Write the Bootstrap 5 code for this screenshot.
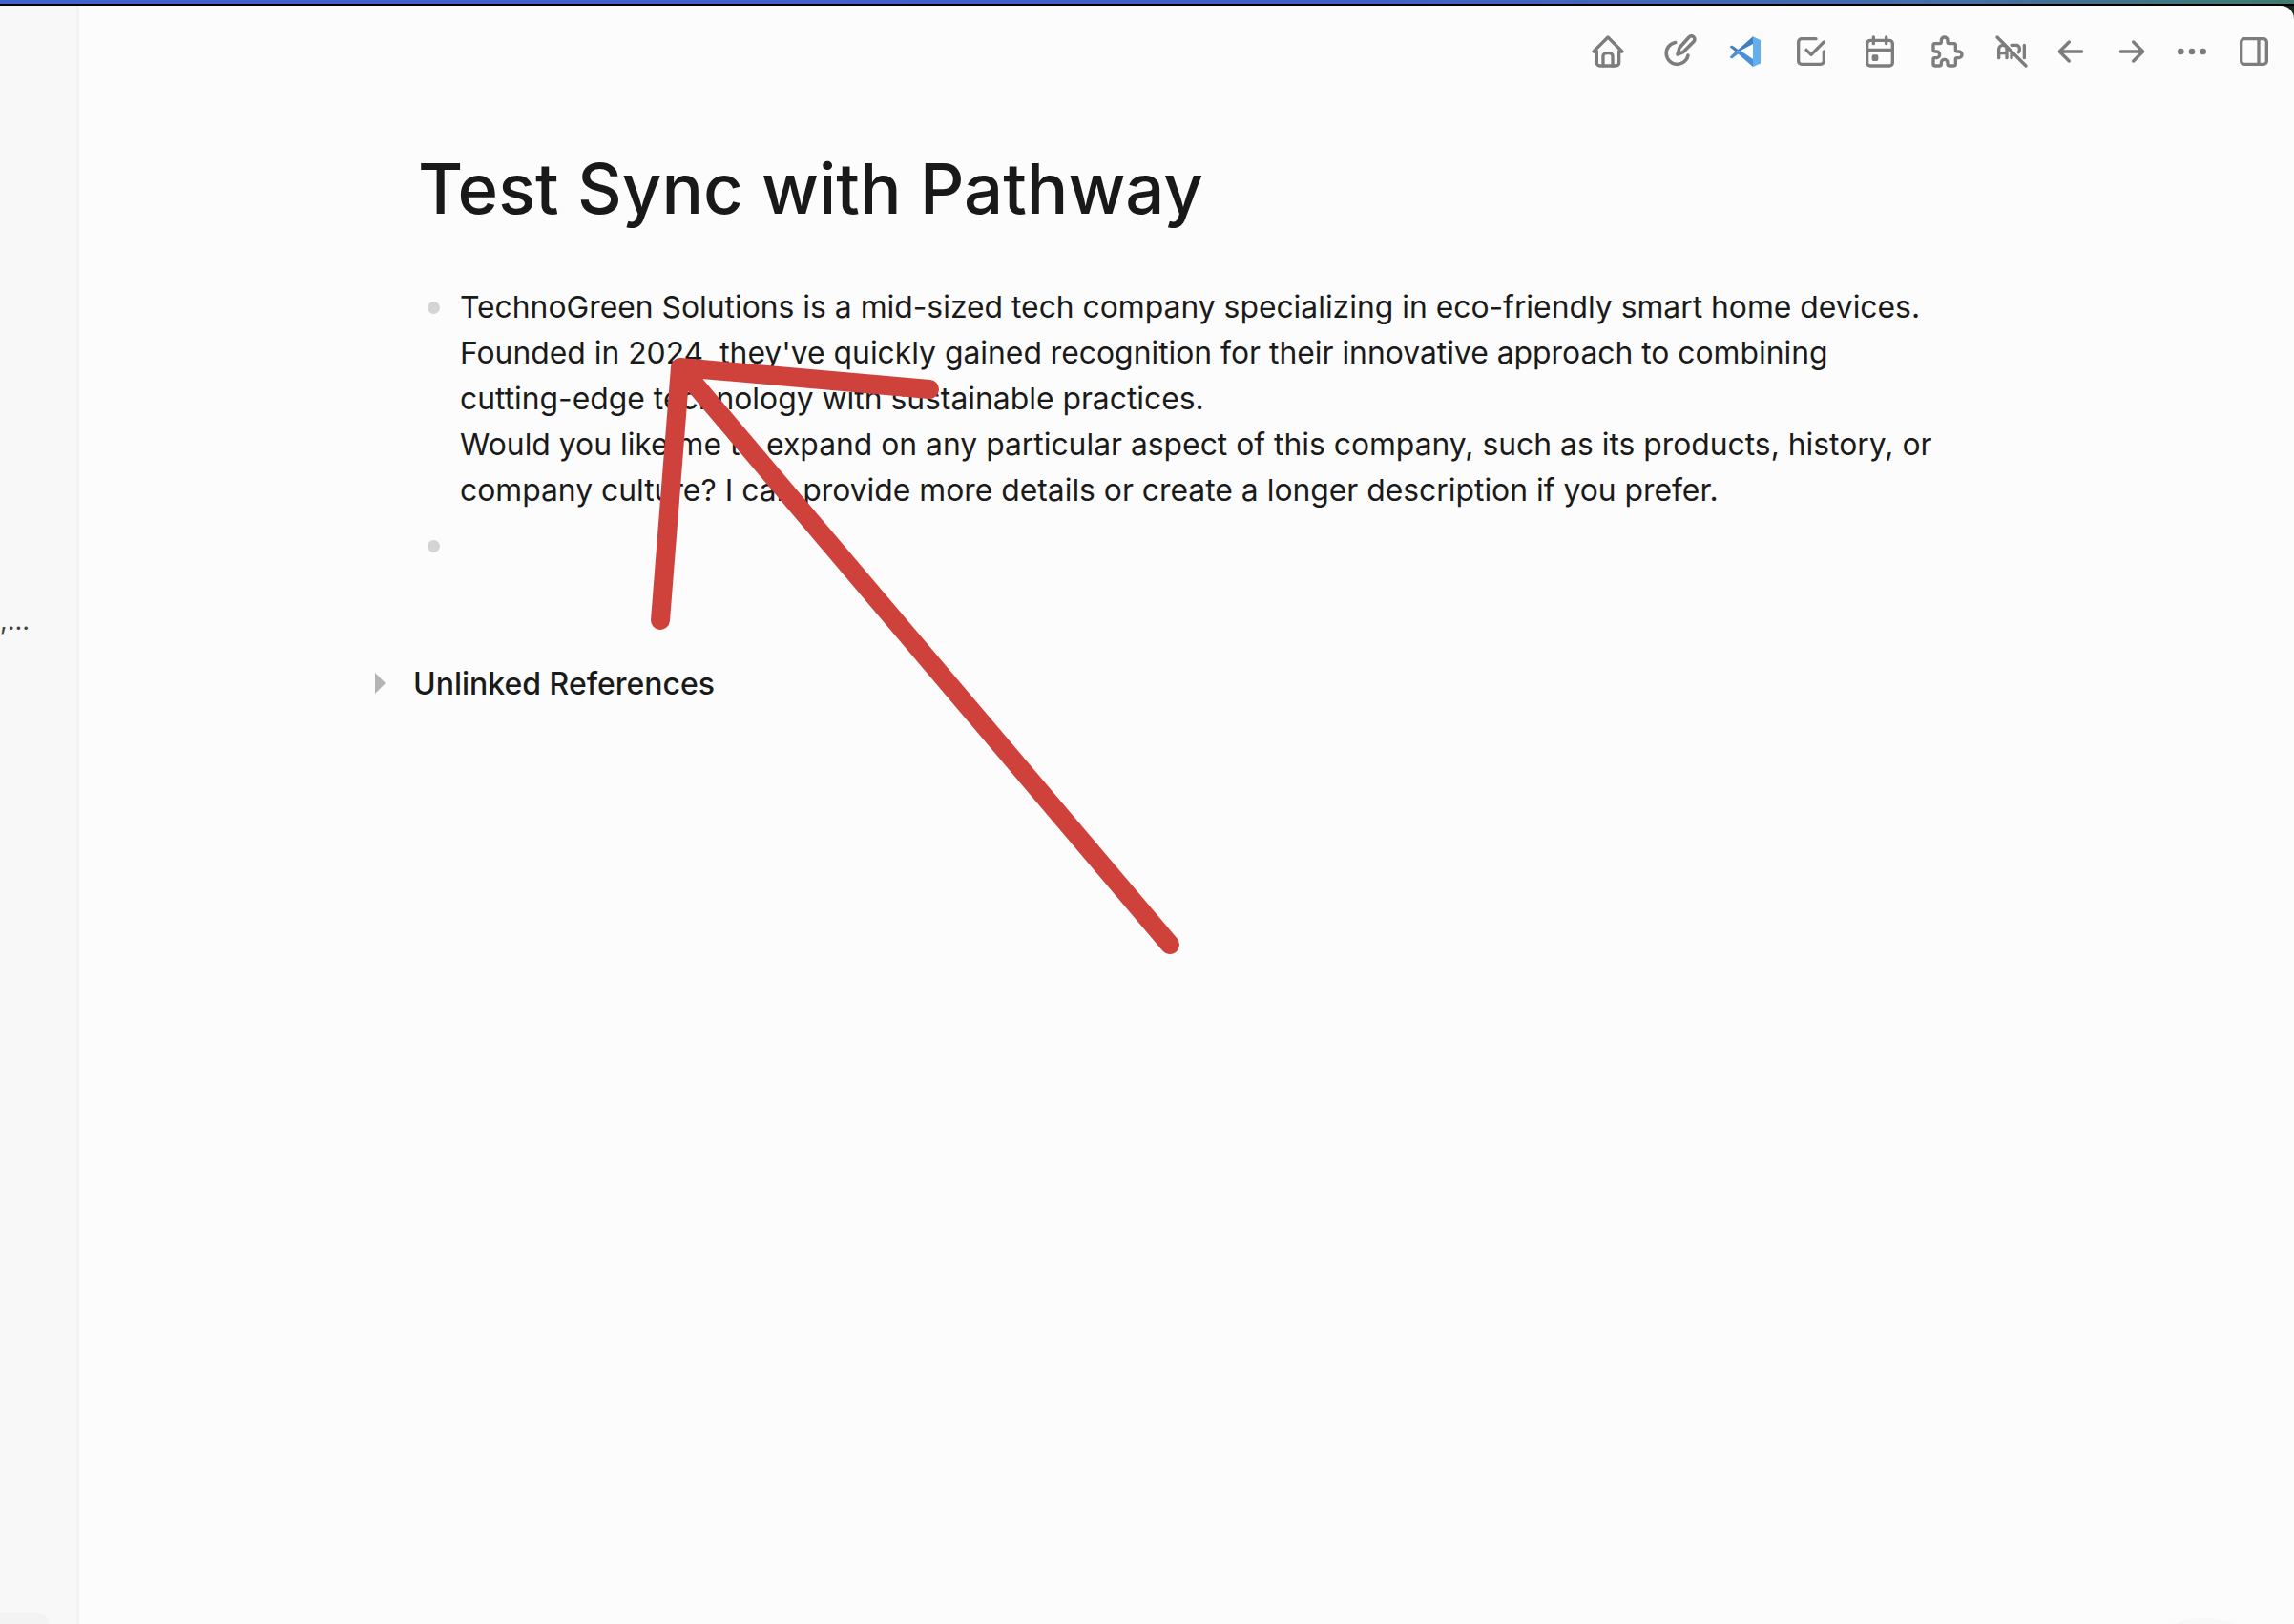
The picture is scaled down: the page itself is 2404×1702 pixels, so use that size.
<!DOCTYPE html>
<html lang="en">
<head>
<meta charset="utf-8">
<title>Test Sync with Pathway</title>
<link rel="stylesheet" href="https://cdn.jsdelivr.net/npm/bootstrap@5.3.0/dist/css/bootstrap.min.css">
<style>
html,body{height:100%;margin:0;overflow:hidden;background:#0d0d0d}
body{font-family:Inter,"Liberation Sans",sans-serif;color:#1a1a1a}
.shell{position:relative;width:2404px;height:1702px;overflow:hidden;background:#fcfcfc}
.topline{height:4px;background:linear-gradient(90deg,#4360cf 0%,#4360c8 60%,#476ea8 85%,#3f7a6c 100%)}
.topblack{height:2px;background:#000}
.workspace{height:1696px;background:#17261d}
.leftrail{width:83px;flex:none;background:#f8f8f8;border-right:3px solid #f3f3f3;position:relative;overflow:hidden}
.railtext{padding-top:627px;font-size:27px;line-height:36px;color:#444;white-space:nowrap}
.railpill{position:absolute;left:-30px;bottom:-20px;width:82px;height:32px;background:#f3f3f3;border-radius:14px}
.mainpane{flex:1;min-width:0;background:#fcfcfc;border-top-right-radius:14px;position:relative}
.toolrow{height:96px;padding-right:22px;padding-top:28px;align-items:flex-start}
.toolrow svg{width:40px;height:40px;flex:none;fill:none;stroke:#7d7d7d;stroke-width:2;stroke-linecap:round;stroke-linejoin:round}
.toolrow svg.pxicon{stroke-width:3.6}
.toolrow svg.noline{stroke:none}
.toolrow svg:nth-child(2){margin-left:34px}
.toolrow svg:nth-child(3){margin-left:29px}
.toolrow svg:nth-child(4){margin-left:30px}
.toolrow svg:nth-child(5){margin-left:32px}
.toolrow svg:nth-child(6){margin-left:31px}
.toolrow svg:nth-child(7){margin-left:27px}
.toolrow svg:nth-child(8){margin-left:22px}
.toolrow svg:nth-child(9){margin-left:24px}
.toolrow svg:nth-child(10){margin-left:23px}
.toolrow svg:nth-child(11){margin-left:25px}
.pagebody{padding-left:357px;width:1957px}
.pagetitle{font-size:72.4px;line-height:86px;font-weight:550;margin:53px 0 0 -2px;color:#191919}
.blocks{list-style:none;margin:57px 0 0;padding:0;font-size:31.84px;line-height:48px}
.blocks li{position:relative;padding-left:42px}
.blocks li::before{content:"";position:absolute;left:8px;top:18px;width:13px;height:13px;border-radius:50%;background:#d4d4d4}
.blocks li.emptyblock{height:48px;margin-top:10px}
.unlinked{margin-top:97px;margin-left:-42px;font-size:32px;line-height:48px;font-weight:500;color:#1a1a1a}
.tri{width:0;height:0;border-left:11px solid #b4b4b4;border-top:11px solid transparent;border-bottom:11px solid transparent;margin-left:-5px;margin-right:29px;margin-top:-3px}
.markup{position:absolute;left:0;top:0;width:2404px;height:1702px;pointer-events:none}
.cornerblob{position:absolute;left:2270px;top:1696px;width:80px;height:30px;border-radius:50%;background:#f8f8f8}
</style>
</head>
<body>
<div class="shell">
  <div class="topline"></div>
  <div class="topblack"></div>
  <div class="workspace d-flex">
    <aside class="leftrail">
      <div class="railtext">,...</div>
      <div class="railpill"></div>
    </aside>
    <main class="mainpane">
      <div class="toolrow d-flex justify-content-end">
        <svg viewBox="0 0 24 24"><path d="M5 12H3l9-9 9 9h-2"/><path d="M5 12v7a2 2 0 0 0 2 2h10a2 2 0 0 0 2-2v-7"/><path d="M9 21v-6a2 2 0 0 1 2-2h2a2 2 0 0 1 2 2v6"/></svg>
        <svg class="pxicon" viewBox="-2 1 40 40"><path d="M14.700 11.500A11.500 11.500 0 1 0 28 25"/><path d="M17 24l2-7L29 6a3.300 3.300 0 0 1 5 4.500L23 21.500z"/></svg>
        <svg class="noline" viewBox="-2 -2 40 40"><path fill="#65aeee" d="M27 2.300l8 3.700v24.500L27 34z"/><path fill="#3f7fbf" d="M27 2.300 11.500 16 5 11.500 2.500 13l6 5 5.500-1 13-7z"/><path fill="#4a90d9" d="M2.500 24l6-6 5.500-1 13 9v8L11.500 20.500 5 25.500z"/></svg>
        <svg viewBox="0 0 24 24"><path d="M9 11l3 3 8-8"/><path d="M20 12v6a2 2 0 0 1-2 2H6a2 2 0 0 1-2-2V6a2 2 0 0 1 2-2h9"/></svg>
        <svg viewBox="0 0 24 24"><rect x="4" y="5" width="16" height="16" rx="2"/><path d="M16 3v4M8 3v4M4 11h16M8 15h2v2H8z"/></svg>
        <svg viewBox="0 0 24 24"><path d="M4 7h3a1 1 0 0 0 1-1V5a2 2 0 0 1 4 0v1a1 1 0 0 0 1 1h3a1 1 0 0 1 1 1v3a1 1 0 0 0 1 1h1a2 2 0 0 1 0 4h-1a1 1 0 0 0-1 1v3a1 1 0 0 1-1 1h-3a1 1 0 0 1-1-1v-1a2 2 0 0 0-4 0v1a1 1 0 0 1-1 1H4a1 1 0 0 1-1-1v-3a1 1 0 0 1 1-1h1a2 2 0 0 0 0-4H4a1 1 0 0 1-1-1V8a1 1 0 0 1 1-1"/></svg>
        <svg viewBox="0 0 24 24"><path d="M4 13h5M12 16v-4m0-4h3a2 2 0 0 1 2 2v1c0 .554-.225 1.055-.589 1.417M13.000 13h-1M20 8v8M9 16v-5.500a2.500 2.500 0 0 0-5 0V16M3 3l18 18"/></svg>
        <svg viewBox="0 0 24 24"><path d="M5 12h14M5 12l6 6M5 12l6-6"/></svg>
        <svg viewBox="0 0 24 24"><path d="M5 12h14M13 18l6-6M13 6l6 6"/></svg>
        <svg viewBox="0 0 24 24"><circle cx="5" cy="12" r="1"/><circle cx="12" cy="12" r="1"/><circle cx="19" cy="12" r="1"/></svg>
        <svg viewBox="0 0 24 24"><rect x="4" y="4" width="16" height="16" rx="2"/><path d="M15 4v16"/></svg>
      </div>
      <article class="pagebody">
        <h1 class="pagetitle">Test Sync with Pathway</h1>
        <ul class="blocks">
          <li>TechnoGreen Solutions is a mid-sized tech company specializing in eco-friendly smart home devices. Founded in 2024, they've quickly gained recognition for their innovative approach to combining cutting-edge technology with sustainable practices.<br>Would you like me to expand on any particular aspect of this company, such as its products, history, or company culture? I can provide more details or create a longer description if you prefer.</li>
          <li class="emptyblock"></li>
        </ul>
        <div class="unlinked d-flex align-items-center"><span class="tri"></span><span>Unlinked References</span></div>
      </article>
    </main>
  </div>
  <div class="cornerblob"></div>
  <svg class="markup" viewBox="0 0 2404 1702"><path d="M692 650 713 385 974 408M713 385 1226 990" fill="none" stroke="#cf423c" stroke-width="20" stroke-linecap="round" stroke-linejoin="round"/></svg>
</div>
<script src="https://cdn.jsdelivr.net/npm/bootstrap@5.3.0/dist/js/bootstrap.bundle.min.js"></script>
</body>
</html>
